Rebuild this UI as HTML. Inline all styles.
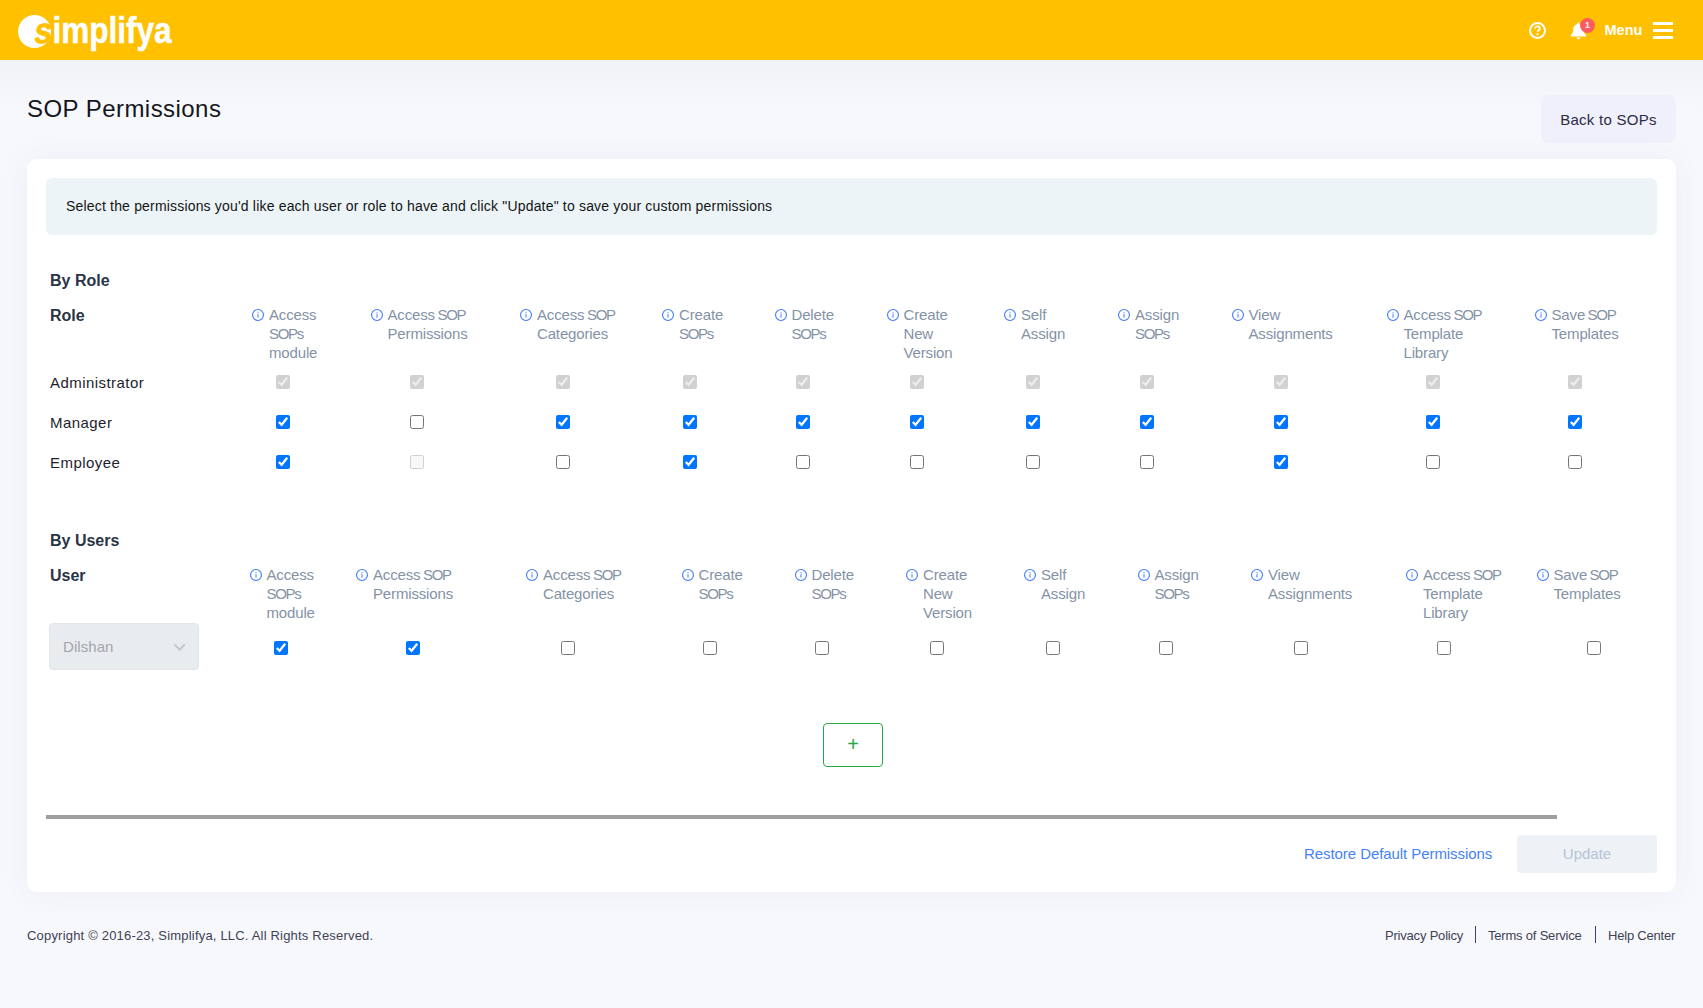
<!DOCTYPE html>
<html lang="en">
<head>
<meta charset="utf-8">
<title>SOP Permissions</title>
<style>
*{box-sizing:border-box;margin:0;padding:0}
html,body{width:1703px;height:1008px;overflow:hidden}
body{font-family:"Liberation Sans",sans-serif;background:#f7f8fc;position:relative;color:#1e1e2d}
.abs{position:absolute}
#hdr{position:absolute;left:0;top:0;width:1703px;height:60px;background:#ffc000}
#shade{position:absolute;left:0;top:60px;width:1703px;height:48px;background:linear-gradient(#f1f2f7,#f7f8fc)}
#logo{position:absolute;left:18px;top:15px;width:33px;height:33px;border-radius:50%;background:#fff}
#logotxt{position:absolute;left:35px;top:9.2px;font-weight:bold;font-size:36px;line-height:44px;color:#fff;-webkit-text-stroke:.5px #fff;transform:scaleX(.875);transform-origin:0 0;white-space:nowrap}
#logotxt span{color:#ffc000;-webkit-text-stroke:.7px #ffc000;display:inline-block;transform:skewX(-9deg)}
#help{position:absolute;left:1529px;top:22px}
#bell{position:absolute;left:1570px;top:21.500px}
#badge{position:absolute;left:1580px;top:18px;width:15px;height:15px;border-radius:50%;background:#ff5b5c;color:#fff;font-size:9px;font-weight:bold;line-height:15px;text-align:center}
#menu{position:absolute;left:1604.500px;top:21px;font-size:14.5px;line-height:18px;font-weight:bold;color:#fff}
.bar{position:absolute;left:1653px;width:20px;height:3px;background:#fff}
h1{position:absolute;left:27px;top:94px;font-size:24px;line-height:30px;font-weight:normal;color:#15161c;letter-spacing:.45px;white-space:nowrap}
#back{position:absolute;left:1541px;top:94.500px;width:135px;height:48px;border-radius:8px;background:#f0effc;color:#2b2d42;font-size:15px;line-height:49px;text-align:center;letter-spacing:.27px}
#card{position:absolute;left:27px;top:159px;width:1649px;height:733px;border-radius:10px;background:#fff;box-shadow:0 0 30px rgba(60,75,120,.055)}
#info{position:absolute;left:46px;top:178px;width:1611px;height:57px;border-radius:6px;background:#ecf4f8;color:#141414;font-size:14px;line-height:57px;padding-left:20px;letter-spacing:.18px;white-space:nowrap}
.h2{position:absolute;left:50px;font-weight:bold;font-size:16px;line-height:20px;color:#2a3447}
.th{position:absolute;white-space:nowrap;font-size:15px;line-height:19px;color:#8492a6;letter-spacing:-.15px;word-spacing:-1.5px}
.th .ii{position:absolute;left:0;top:3.500px}
.th .tl{display:block;margin-left:17px}
.th .c{letter-spacing:-1.300px}
.rn{position:absolute;left:50px;font-size:15px;line-height:20px;color:#1e1e2d;letter-spacing:.45px}
.cb{position:absolute;width:14px;height:14px;margin:0}
#sel{position:absolute;left:49px;top:623px;width:150px;height:47px;border-radius:4px;background:#e9ecef;border:1px solid #e1e4e8;color:#a1a5ab;font-size:15px;line-height:45px;padding-left:13px;letter-spacing:.07px}
#plus{position:absolute;left:823px;top:723px;width:60px;height:44px;border:1px solid #28a745;border-radius:4px;color:#28a745;font-size:20px;line-height:41.5px;text-align:center}
#sb{position:absolute;left:46px;top:815px;width:1511px;height:4px;background:#9e9e9e}
#restore{position:absolute;left:1304px;top:844px;font-size:15px;line-height:20px;color:#4582f8;white-space:nowrap;letter-spacing:-.07px}
#update{position:absolute;left:1517px;top:835px;width:140px;height:38px;border-radius:4px;background:#eef2f7;color:#b5c4d7;font-size:15px;line-height:38px;text-align:center}
.ft{position:absolute;top:926.500px;letter-spacing:-.2px;font-size:13px;line-height:18px;color:#3f4254;white-space:nowrap}
.sep{position:absolute;top:926px;width:1px;height:17px;background:#3d3f6e}
</style>
</head>
<body>
<div id="shade"></div>
<div id="hdr">
  <div id="logo"></div>
  <div id="logotxt"><span>s</span>implifya</div>
  <svg id="help" width="17" height="17" viewBox="0 0 17 17"><circle cx="8.5" cy="8.5" r="7.5" fill="none" stroke="#fff" stroke-width="2"/><path d="M6.1 6.700c0-1.400 1-2.300 2.400-2.300s2.400.8 2.400 2.100c0 1.700-2.300 1.700-2.300 3.300" fill="none" stroke="#fff" stroke-width="1.700"/><circle cx="8.600" cy="12.300" r="1.100" fill="#fff"/></svg>
  <svg id="bell" width="17" height="18" viewBox="0 0 16 17"><path d="M8 0.5c-.6 0-1 .4-1 1v.4C4.6 2.4 3 4.400 3 6.900c0 3.300-1.300 4.700-2.300 5.600-.4.400-.1 1.100.4 1.100h13.800c.5 0 .8-.7.4-1.100-1-.9-2.300-2.300-2.300-5.600 0-2.500-1.600-4.500-4-5V1.500c0-.6-.4-1-1-1z" fill="#fff"/><path d="M6.200 14.600a1.800 1.800 0 0 0 3.600 0z" fill="#fff"/></svg>
  <div id="badge">1</div>
  <div id="menu">Menu</div>
  <div class="bar" style="top:22px"></div><div class="bar" style="top:29px"></div><div class="bar" style="top:36px"></div>
</div>
<h1>SOP Permissions</h1>
<div id="back">Back to SOPs</div>
<div id="card"></div>
<div id="info">Select the permissions you'd like each user or role to have and click "Update" to save your custom permissions</div>
<div class="h2" style="top:271px">By Role</div>
<div class="h2" style="top:306px">Role</div>
<div class="h2" style="top:531px">By Users</div>
<div class="h2" style="top:566px">User</div>
<div class="th" style="left:252px;top:305px"><svg class="ii" viewBox="0 0 12 12" width="12" height="12"><circle cx="6" cy="6" r="5.45" fill="none" stroke="#3e7bfa" stroke-width="1.1"/><rect x="5.5" y="5.2" width="1" height="3.4" fill="#3e7bfa"/><rect x="5.5" y="3.3" width="1" height="1.1" fill="#3e7bfa"/></svg><span class="tl">Access<br><span class="c">SOP</span>s<br>module</span></div>
<div class="th" style="left:370.5px;top:305px"><svg class="ii" viewBox="0 0 12 12" width="12" height="12"><circle cx="6" cy="6" r="5.45" fill="none" stroke="#3e7bfa" stroke-width="1.1"/><rect x="5.5" y="5.2" width="1" height="3.4" fill="#3e7bfa"/><rect x="5.5" y="3.3" width="1" height="1.1" fill="#3e7bfa"/></svg><span class="tl">Access <span class="c">SOP</span><br>Permissions</span></div>
<div class="th" style="left:520px;top:305px"><svg class="ii" viewBox="0 0 12 12" width="12" height="12"><circle cx="6" cy="6" r="5.45" fill="none" stroke="#3e7bfa" stroke-width="1.1"/><rect x="5.5" y="5.2" width="1" height="3.4" fill="#3e7bfa"/><rect x="5.5" y="3.3" width="1" height="1.1" fill="#3e7bfa"/></svg><span class="tl">Access <span class="c">SOP</span><br>Categories</span></div>
<div class="th" style="left:662px;top:305px"><svg class="ii" viewBox="0 0 12 12" width="12" height="12"><circle cx="6" cy="6" r="5.45" fill="none" stroke="#3e7bfa" stroke-width="1.1"/><rect x="5.5" y="5.2" width="1" height="3.4" fill="#3e7bfa"/><rect x="5.5" y="3.3" width="1" height="1.1" fill="#3e7bfa"/></svg><span class="tl">Create<br><span class="c">SOP</span>s</span></div>
<div class="th" style="left:774.5px;top:305px"><svg class="ii" viewBox="0 0 12 12" width="12" height="12"><circle cx="6" cy="6" r="5.45" fill="none" stroke="#3e7bfa" stroke-width="1.1"/><rect x="5.5" y="5.2" width="1" height="3.4" fill="#3e7bfa"/><rect x="5.5" y="3.3" width="1" height="1.1" fill="#3e7bfa"/></svg><span class="tl">Delete<br><span class="c">SOP</span>s</span></div>
<div class="th" style="left:886.5px;top:305px"><svg class="ii" viewBox="0 0 12 12" width="12" height="12"><circle cx="6" cy="6" r="5.45" fill="none" stroke="#3e7bfa" stroke-width="1.1"/><rect x="5.5" y="5.2" width="1" height="3.4" fill="#3e7bfa"/><rect x="5.5" y="3.3" width="1" height="1.1" fill="#3e7bfa"/></svg><span class="tl">Create<br>New<br>Version</span></div>
<div class="th" style="left:1004px;top:305px"><svg class="ii" viewBox="0 0 12 12" width="12" height="12"><circle cx="6" cy="6" r="5.45" fill="none" stroke="#3e7bfa" stroke-width="1.1"/><rect x="5.5" y="5.2" width="1" height="3.4" fill="#3e7bfa"/><rect x="5.5" y="3.3" width="1" height="1.1" fill="#3e7bfa"/></svg><span class="tl">Self<br>Assign</span></div>
<div class="th" style="left:1118px;top:305px"><svg class="ii" viewBox="0 0 12 12" width="12" height="12"><circle cx="6" cy="6" r="5.45" fill="none" stroke="#3e7bfa" stroke-width="1.1"/><rect x="5.5" y="5.2" width="1" height="3.4" fill="#3e7bfa"/><rect x="5.5" y="3.3" width="1" height="1.1" fill="#3e7bfa"/></svg><span class="tl">Assign<br><span class="c">SOP</span>s</span></div>
<div class="th" style="left:1231.5px;top:305px"><svg class="ii" viewBox="0 0 12 12" width="12" height="12"><circle cx="6" cy="6" r="5.45" fill="none" stroke="#3e7bfa" stroke-width="1.1"/><rect x="5.5" y="5.2" width="1" height="3.4" fill="#3e7bfa"/><rect x="5.5" y="3.3" width="1" height="1.1" fill="#3e7bfa"/></svg><span class="tl">View<br>Assignments</span></div>
<div class="th" style="left:1386.5px;top:305px"><svg class="ii" viewBox="0 0 12 12" width="12" height="12"><circle cx="6" cy="6" r="5.45" fill="none" stroke="#3e7bfa" stroke-width="1.1"/><rect x="5.5" y="5.2" width="1" height="3.4" fill="#3e7bfa"/><rect x="5.5" y="3.3" width="1" height="1.1" fill="#3e7bfa"/></svg><span class="tl">Access <span class="c">SOP</span><br>Template<br>Library</span></div>
<div class="th" style="left:1534.5px;top:305px"><svg class="ii" viewBox="0 0 12 12" width="12" height="12"><circle cx="6" cy="6" r="5.45" fill="none" stroke="#3e7bfa" stroke-width="1.1"/><rect x="5.5" y="5.2" width="1" height="3.4" fill="#3e7bfa"/><rect x="5.5" y="3.3" width="1" height="1.1" fill="#3e7bfa"/></svg><span class="tl">Save <span class="c">SOP</span><br>Templates</span></div>
<div class="rn" style="top:373px">Administrator</div>
<input type="checkbox" class="cb" style="left:276px;top:375px" checked disabled>
<input type="checkbox" class="cb" style="left:410px;top:375px" checked disabled>
<input type="checkbox" class="cb" style="left:556px;top:375px" checked disabled>
<input type="checkbox" class="cb" style="left:683px;top:375px" checked disabled>
<input type="checkbox" class="cb" style="left:796px;top:375px" checked disabled>
<input type="checkbox" class="cb" style="left:910px;top:375px" checked disabled>
<input type="checkbox" class="cb" style="left:1026px;top:375px" checked disabled>
<input type="checkbox" class="cb" style="left:1140px;top:375px" checked disabled>
<input type="checkbox" class="cb" style="left:1274px;top:375px" checked disabled>
<input type="checkbox" class="cb" style="left:1426px;top:375px" checked disabled>
<input type="checkbox" class="cb" style="left:1568px;top:375px" checked disabled>
<div class="rn" style="top:413px">Manager</div>
<input type="checkbox" class="cb" style="left:276px;top:415px" checked>
<input type="checkbox" class="cb" style="left:410px;top:415px">
<input type="checkbox" class="cb" style="left:556px;top:415px" checked>
<input type="checkbox" class="cb" style="left:683px;top:415px" checked>
<input type="checkbox" class="cb" style="left:796px;top:415px" checked>
<input type="checkbox" class="cb" style="left:910px;top:415px" checked>
<input type="checkbox" class="cb" style="left:1026px;top:415px" checked>
<input type="checkbox" class="cb" style="left:1140px;top:415px" checked>
<input type="checkbox" class="cb" style="left:1274px;top:415px" checked>
<input type="checkbox" class="cb" style="left:1426px;top:415px" checked>
<input type="checkbox" class="cb" style="left:1568px;top:415px" checked>
<div class="rn" style="top:453px">Employee</div>
<input type="checkbox" class="cb" style="left:276px;top:455px" checked>
<input type="checkbox" class="cb" style="left:410px;top:455px" disabled>
<input type="checkbox" class="cb" style="left:556px;top:455px">
<input type="checkbox" class="cb" style="left:683px;top:455px" checked>
<input type="checkbox" class="cb" style="left:796px;top:455px">
<input type="checkbox" class="cb" style="left:910px;top:455px">
<input type="checkbox" class="cb" style="left:1026px;top:455px">
<input type="checkbox" class="cb" style="left:1140px;top:455px">
<input type="checkbox" class="cb" style="left:1274px;top:455px" checked>
<input type="checkbox" class="cb" style="left:1426px;top:455px">
<input type="checkbox" class="cb" style="left:1568px;top:455px">
<div class="th" style="left:249.5px;top:565px"><svg class="ii" viewBox="0 0 12 12" width="12" height="12"><circle cx="6" cy="6" r="5.45" fill="none" stroke="#3e7bfa" stroke-width="1.1"/><rect x="5.5" y="5.2" width="1" height="3.4" fill="#3e7bfa"/><rect x="5.5" y="3.3" width="1" height="1.1" fill="#3e7bfa"/></svg><span class="tl">Access<br><span class="c">SOP</span>s<br>module</span></div>
<div class="th" style="left:356px;top:565px"><svg class="ii" viewBox="0 0 12 12" width="12" height="12"><circle cx="6" cy="6" r="5.45" fill="none" stroke="#3e7bfa" stroke-width="1.1"/><rect x="5.5" y="5.2" width="1" height="3.4" fill="#3e7bfa"/><rect x="5.5" y="3.3" width="1" height="1.1" fill="#3e7bfa"/></svg><span class="tl">Access <span class="c">SOP</span><br>Permissions</span></div>
<div class="th" style="left:526px;top:565px"><svg class="ii" viewBox="0 0 12 12" width="12" height="12"><circle cx="6" cy="6" r="5.45" fill="none" stroke="#3e7bfa" stroke-width="1.1"/><rect x="5.5" y="5.2" width="1" height="3.4" fill="#3e7bfa"/><rect x="5.5" y="3.3" width="1" height="1.1" fill="#3e7bfa"/></svg><span class="tl">Access <span class="c">SOP</span><br>Categories</span></div>
<div class="th" style="left:681.5px;top:565px"><svg class="ii" viewBox="0 0 12 12" width="12" height="12"><circle cx="6" cy="6" r="5.45" fill="none" stroke="#3e7bfa" stroke-width="1.1"/><rect x="5.5" y="5.2" width="1" height="3.4" fill="#3e7bfa"/><rect x="5.5" y="3.3" width="1" height="1.1" fill="#3e7bfa"/></svg><span class="tl">Create<br><span class="c">SOP</span>s</span></div>
<div class="th" style="left:794.5px;top:565px"><svg class="ii" viewBox="0 0 12 12" width="12" height="12"><circle cx="6" cy="6" r="5.45" fill="none" stroke="#3e7bfa" stroke-width="1.1"/><rect x="5.5" y="5.2" width="1" height="3.4" fill="#3e7bfa"/><rect x="5.5" y="3.3" width="1" height="1.1" fill="#3e7bfa"/></svg><span class="tl">Delete<br><span class="c">SOP</span>s</span></div>
<div class="th" style="left:906px;top:565px"><svg class="ii" viewBox="0 0 12 12" width="12" height="12"><circle cx="6" cy="6" r="5.45" fill="none" stroke="#3e7bfa" stroke-width="1.1"/><rect x="5.5" y="5.2" width="1" height="3.4" fill="#3e7bfa"/><rect x="5.5" y="3.3" width="1" height="1.1" fill="#3e7bfa"/></svg><span class="tl">Create<br>New<br>Version</span></div>
<div class="th" style="left:1024px;top:565px"><svg class="ii" viewBox="0 0 12 12" width="12" height="12"><circle cx="6" cy="6" r="5.45" fill="none" stroke="#3e7bfa" stroke-width="1.1"/><rect x="5.5" y="5.2" width="1" height="3.4" fill="#3e7bfa"/><rect x="5.5" y="3.3" width="1" height="1.1" fill="#3e7bfa"/></svg><span class="tl">Self<br>Assign</span></div>
<div class="th" style="left:1137.5px;top:565px"><svg class="ii" viewBox="0 0 12 12" width="12" height="12"><circle cx="6" cy="6" r="5.45" fill="none" stroke="#3e7bfa" stroke-width="1.1"/><rect x="5.5" y="5.2" width="1" height="3.4" fill="#3e7bfa"/><rect x="5.5" y="3.3" width="1" height="1.1" fill="#3e7bfa"/></svg><span class="tl">Assign<br><span class="c">SOP</span>s</span></div>
<div class="th" style="left:1251px;top:565px"><svg class="ii" viewBox="0 0 12 12" width="12" height="12"><circle cx="6" cy="6" r="5.45" fill="none" stroke="#3e7bfa" stroke-width="1.1"/><rect x="5.5" y="5.2" width="1" height="3.4" fill="#3e7bfa"/><rect x="5.5" y="3.3" width="1" height="1.1" fill="#3e7bfa"/></svg><span class="tl">View<br>Assignments</span></div>
<div class="th" style="left:1406px;top:565px"><svg class="ii" viewBox="0 0 12 12" width="12" height="12"><circle cx="6" cy="6" r="5.45" fill="none" stroke="#3e7bfa" stroke-width="1.1"/><rect x="5.5" y="5.2" width="1" height="3.4" fill="#3e7bfa"/><rect x="5.5" y="3.3" width="1" height="1.1" fill="#3e7bfa"/></svg><span class="tl">Access <span class="c">SOP</span><br>Template<br>Library</span></div>
<div class="th" style="left:1536.5px;top:565px"><svg class="ii" viewBox="0 0 12 12" width="12" height="12"><circle cx="6" cy="6" r="5.45" fill="none" stroke="#3e7bfa" stroke-width="1.1"/><rect x="5.5" y="5.2" width="1" height="3.4" fill="#3e7bfa"/><rect x="5.5" y="3.3" width="1" height="1.1" fill="#3e7bfa"/></svg><span class="tl">Save <span class="c">SOP</span><br>Templates</span></div>
<input type="checkbox" class="cb" style="left:274px;top:641px" checked>
<input type="checkbox" class="cb" style="left:406px;top:641px" checked>
<input type="checkbox" class="cb" style="left:561px;top:641px">
<input type="checkbox" class="cb" style="left:703px;top:641px">
<input type="checkbox" class="cb" style="left:815px;top:641px">
<input type="checkbox" class="cb" style="left:930px;top:641px">
<input type="checkbox" class="cb" style="left:1046px;top:641px">
<input type="checkbox" class="cb" style="left:1159px;top:641px">
<input type="checkbox" class="cb" style="left:1294px;top:641px">
<input type="checkbox" class="cb" style="left:1437px;top:641px">
<input type="checkbox" class="cb" style="left:1587px;top:641px">
<div id="sel">Dilshan<svg style="position:absolute;left:123px;top:18.700px" width="14" height="9" viewBox="0 0 14 9"><path d="M1.400 1.400l5.200 5.200 5.200-5.200" fill="none" stroke="#c3c5c8" stroke-width="2"/></svg></div>
<div id="plus">+</div>
<div id="sb"></div>
<div id="restore">Restore Default Permissions</div>
<div id="update">Update</div>
<div class="ft" style="left:27px;letter-spacing:.19px">Copyright © 2016-23, Simplifya, LLC. All Rights Reserved.</div>
<div class="ft" style="left:1385px">Privacy Policy</div>
<div class="sep" style="left:1475px"></div>
<div class="ft" style="left:1488px">Terms of Service</div>
<div class="sep" style="left:1595px"></div>
<div class="ft" style="left:1608px">Help Center</div>
</body>
</html>
